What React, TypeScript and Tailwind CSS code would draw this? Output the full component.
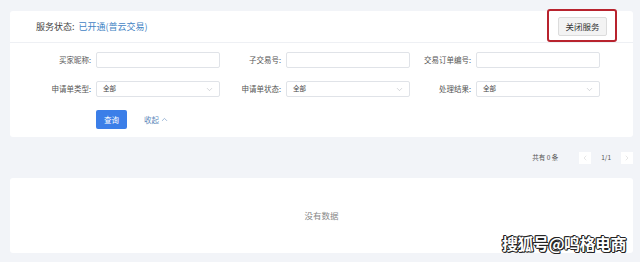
import { ChevronDown, ChevronUp, ChevronLeft, ChevronRight } from "lucide-react";

const font = { fontFamily: '"Noto Sans CJK SC", "Noto Sans", sans-serif' };

function Field({ label, select }: { label: string; select?: boolean }) {
  return (
    <div className="flex items-center w-[190px]">
      <span className="w-[66px] shrink-0 text-right text-[7.5px] text-[#555] pr-[5px] whitespace-nowrap">{label}</span>
      <div className="relative flex h-[16px] w-[124px] items-center rounded-[2px] border border-[#e0e3e8] bg-white px-[6px]">
        {select && (
          <>
            <span className="text-[6.5px] text-[#444]">全部</span>
            <ChevronDown className="absolute right-[5px] h-[9px] w-[9px] text-[#b5b9c0]" strokeWidth={1.5} />
          </>
        )}
      </div>
    </div>
  );
}

export default function App() {
  return (
    <div style={font} className="relative h-[262px] w-[640px] overflow-hidden bg-[#f2f4f8] pl-[10px] pr-[7px] pt-[11px]">
      <div className="rounded-[3px] bg-white">
        <div className="relative flex h-[32px] items-center justify-between border-b border-[#eef0f4] pl-[26px] pr-[26px]">
          <div className="flex items-center text-[9px]">
            <span className="text-[#444]">服务状态:</span>
            <span className="ml-[4px] text-[#4384c4]">已开通(普云交易)</span>
          </div>
          <div className="relative">
            <button className="flex h-[19px] w-[49px] items-center justify-center rounded-[2px] border border-[#dcdcdc] bg-[#f3f3f3] text-[8.5px] text-[#333]">
              关闭服务
            </button>
            <div className="absolute left-[-11px] top-[-8px] h-[33px] w-[70px] rounded-[3px] border-2 border-[#b8232e]" />
          </div>
        </div>
        <div className="pl-[20px] pt-[9px] pb-[8px]">
          <div className="flex">
            <Field label="买家昵称:" />
            <Field label="子交易号:" />
            <Field label="交易订单编号:" />
          </div>
          <div className="mt-[13px] flex">
            <Field label="申请单类型:" select />
            <Field label="申请单状态:" select />
            <Field label="处理结果:" select />
          </div>
          <div className="mt-[13px] flex items-center pl-[66px]">
            <button className="flex h-[19px] w-[31px] items-center justify-center rounded-[2px] bg-[#3b7ee8] text-[7.5px] text-white">
              查询
            </button>
            <span className="ml-[17px] flex items-center text-[7.5px] text-[#5b88bb]">
              收起
              <ChevronUp className="ml-[1px] h-[9px] w-[9px]" strokeWidth={1.5} />
            </span>
          </div>
        </div>
      </div>

      <div className="flex h-[41px] items-center justify-end">
        <span className="text-[6.5px] text-[#555]">共有 0 条</span>
        <span className="ml-[21px] flex h-[12px] w-[12px] items-center justify-center bg-white text-[#ccc]">
          <ChevronLeft className="h-[8px] w-[8px]" strokeWidth={1.5} />
        </span>
        <span className="mx-[10px] text-[6.5px] text-[#555]">1/1</span>
        <span className="flex h-[12px] w-[12px] items-center justify-center bg-white text-[#ccc]">
          <ChevronRight className="h-[8px] w-[8px]" strokeWidth={1.5} />
        </span>
      </div>

      <div className="flex h-[75px] items-center justify-center rounded-[3px] bg-white">
        <span className="text-[8.5px] text-[#888]">没有数据</span>
      </div>

      <div className="absolute left-[502px] top-[231px] text-[16px] font-bold tracking-[-0.5px] text-white [text-shadow:1px_0_0_#222,-1px_0_0_#222,0_1px_0_#222,0_-1px_0_#222,1px_1px_0_#222,-1px_-1px_0_#222]">
        搜狐号@鸣格电商
      </div>
    </div>
  );
}
